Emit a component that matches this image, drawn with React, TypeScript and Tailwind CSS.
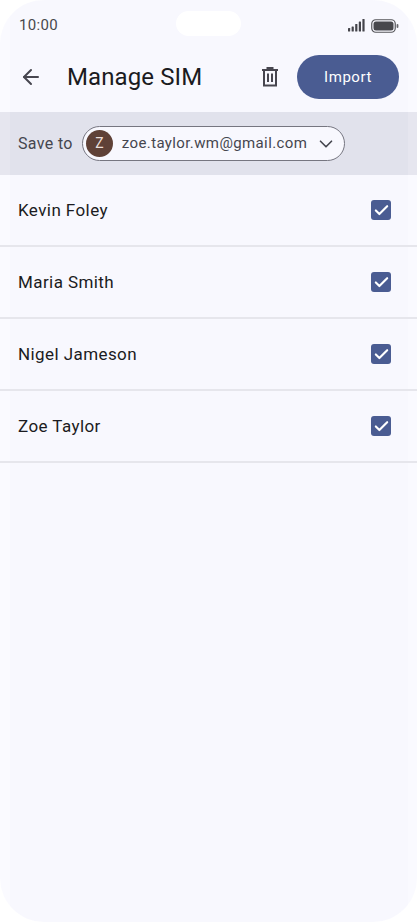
import { ArrowLeft, Check, ChevronDown } from "lucide-react";

const contacts = ["Kevin Foley", "Maria Smith", "Nigel Jameson", "Zoe Taylor"];

function SignalBars() {
  return (
    <svg width="17" height="13" viewBox="0 0 17 13" fill="#44444a">
      <rect x="0" y="9" width="2.2" height="3.5" rx="0.6" />
      <rect x="3.6" y="7.5" width="2.2" height="5" rx="0.6" />
      <rect x="7.2" y="5" width="2.2" height="7.5" rx="0.6" />
      <rect x="10.8" y="2.5" width="2.2" height="10" rx="0.6" />
      <rect x="14.4" y="0" width="2.2" height="12.5" rx="0.6" />
    </svg>
  );
}

function Battery() {
  return (
    <svg width="28" height="14" viewBox="0 0 28 14">
      <rect x="0.75" y="0.75" width="23.5" height="12.5" rx="4" fill="none" stroke="#55555a" strokeWidth="1.2" />
      <rect x="2.5" y="2.5" width="20" height="9" rx="2.5" fill="#47474c" />
      <rect x="25.6" y="5" width="1.8" height="4" rx="0.9" fill="#66666b" />
    </svg>
  );
}

function TrashIcon() {
  return (
    <svg width="24" height="24" viewBox="0 0 24 24" fill="none" stroke="#47464f" strokeWidth="2">
      <path d="M4 5h16M9.5 4.5V3h5v1.5" />
      <path d="M6 5v15.5h12V5" />
      <path d="M10 8.5v8.5M14 8.5v8.5" />
    </svg>
  );
}

export default function App() {
  return (
    <div className="h-[922px] w-[417px] overflow-hidden bg-white font-['Roboto',sans-serif]">
      <div className="flex h-full flex-col overflow-hidden rounded-[44px] bg-[linear-gradient(90deg,#fafaff_10px,#f8f8fe_10px,#f8f8fe_408px,#fafaff_408px)]">
        <div className="relative flex h-[50px] shrink-0 items-center justify-between pl-[19px] pr-[18px] pt-[1px]">
          <span className="text-[15px] leading-none tracking-[0.35px] text-[#48484d]">10:00</span>
          <div className="absolute left-[176px] top-[11px] h-[25px] w-[65px] rounded-full bg-white" />
          <div className="flex items-center gap-[6px]">
            <SignalBars />
            <Battery />
          </div>
        </div>

        <div className="flex h-[62px] shrink-0 items-center pb-[8px] pl-[19px] pr-[18px]">
          <ArrowLeft size={24} strokeWidth={2} className="text-[#47464f]" />
          <h1 className="ml-[24px] text-[24px] font-[375] leading-none tracking-[0.1px] text-[#1b1b21]">Manage SIM</h1>
          <div className="ml-auto flex items-center gap-[15px]">
            <TrashIcon />
            <button className="flex h-[44px] w-[102px] items-center justify-center rounded-full bg-[#4a5c92] text-[15px] tracking-[0.55px] text-white">
              Import
            </button>
          </div>
        </div>

        <div className="flex h-[63px] shrink-0 items-center bg-[linear-gradient(90deg,#e6e6ef_10px,#e1e2ec_10px,#e1e2ec_408px,#e6e6ef_408px)] pl-[18px]">
          <span className="text-[16px] tracking-[0.35px] text-[#45464f]">Save to</span>
          <div className="ml-[9px] flex h-[35px] w-[263px] items-center rounded-full border border-[#767680] bg-[#f8f8fe] pl-[3px] pr-[7px]">
            <div className="flex h-[27px] w-[27px] items-center justify-center rounded-full bg-[#5f4137] text-[14px] text-[#eadfda]">
              Z
            </div>
            <span className="ml-[9px] text-[15px] tracking-[0.38px] text-[#45464f]">zoe.taylor.wm@gmail.com</span>
            <ChevronDown size={22} strokeWidth={1.8} className="ml-auto text-[#45464f]" />
          </div>
        </div>

        <ul>
          {contacts.map((name) => (
            <li
              key={name}
              className="flex h-[72px] items-center justify-between border-b-2 border-[#e6e6ec] pl-[18px] pr-[26px]"
            >
              <span className="pt-[2px] text-[17px] font-[375] tracking-[0.42px] text-[#1b1b21]">{name}</span>
              <span className="flex h-[20px] w-[20px] items-center justify-center rounded-[3px] bg-[#4a5c92]">
                <Check size={17} strokeWidth={3} className="text-white" />
              </span>
            </li>
          ))}
        </ul>
      </div>
    </div>
  );
}
